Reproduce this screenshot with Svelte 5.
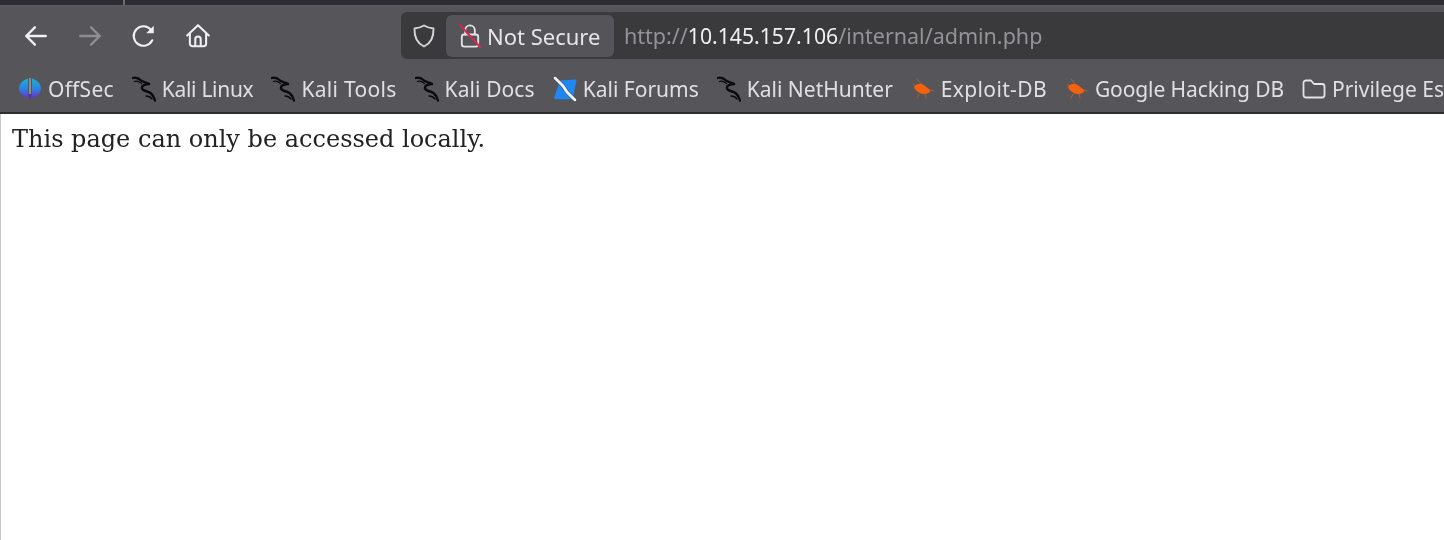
<script>
	// track = letter-spacing per label, the original UI font is a bit off from Noto Sans
	const bookmarks = [
		{ label: "OffSec", icon: "offsec", track: 0.25 },
		{ label: "Kali Linux", icon: "kali", track: -0.3 },
		{ label: "Kali Tools", icon: "kali", track: 0.3 },
		{ label: "Kali Docs", icon: "kali", track: 0.1 },
		{ label: "Kali Forums", icon: "forums", track: 0 },
		{ label: "Kali NetHunter", icon: "kali", track: 0 },
		{ label: "Exploit-DB", icon: "bug", track: 0.35 },
		{ label: "Google Hacking DB", icon: "bug", track: -0.1 },
		{ label: "Privilege Escalation", icon: "folder", track: 0 },
	];
</script>

<div class="browser">
	<div class="tabstrip"><span class="tab-sep"></span></div>

	<div class="toolbar">
		<nav class="nav">
			<button class="nav-btn" aria-label="Back">
				<svg viewBox="0 0 24 24" width="26" height="26" fill="none" stroke="#f0f0f1" stroke-width="2.2" stroke-linecap="round" stroke-linejoin="round">
					<path d="M3 12h18M11 4l-8 8 8 8" />
				</svg>
			</button>
			<button class="nav-btn" aria-label="Forward">
				<svg viewBox="0 0 24 24" width="26" height="26" fill="none" stroke="#8d8d92" stroke-width="2.2" stroke-linecap="round" stroke-linejoin="round">
					<path d="M3 12h18M13 4l8 8-8 8" />
				</svg>
			</button>
			<button class="nav-btn" aria-label="Reload">
				<svg viewBox="0 0 24 24" width="26" height="26" fill="none" stroke="#f0f0f1" stroke-width="2" stroke-linecap="round">
					<path d="M19.600 16a9 9 0 1 1-1-9.600" />
					<path d="M21 2.500V9.500H14Z" fill="#f0f0f1" stroke="none" />
				</svg>
			</button>
			<button class="nav-btn" aria-label="Home">
				<svg viewBox="0 0 24 24" width="26" height="26" fill="none" stroke="#f0f0f1" stroke-width="1.900" stroke-linecap="round" stroke-linejoin="round">
					<path d="M2 11.500 12 2l10 9.500M4.500 9.500V19a2.500 2.500 0 0 0 2.500 2.500h10a2.500 2.500 0 0 0 2.500-2.500V9.500M9.500 21.500V15a2.500 2.500 0 0 1 5 0v6.500" />
				</svg>
			</button>
		</nav>

		<div class="urlbar">
			<span class="shield">
				<svg viewBox="0 0 24 26" width="24" height="26" fill="none" stroke="#d6d6d8" stroke-width="1.900" stroke-linejoin="round">
					<path d="M12 2.500c3 1.800 6 2.700 9.500 3 .3 8-2 14.500-9.500 18C4.500 20 2.200 13.500 2.500 5.500c3.500-.3 6.500-1.200 9.500-3Z" />
				</svg>
			</span>
			<span class="identity">
				<svg viewBox="0 0 24 28" width="24" height="27" fill="none" stroke-linecap="round">
					<path d="M7 13V8.500a5 5 0 0 1 10 0V13" stroke="#e4e4e6" stroke-width="1.900" />
					<rect x="3.500" y="13" width="17" height="12.500" rx="2.500" stroke="#e4e4e6" stroke-width="1.900" />
					<path d="M1.500 3l21 23" stroke="#d7264f" stroke-width="2.200" />
				</svg>
				<span>Not Secure</span>
			</span>
			<span class="url"><span class="dim">http://</span><span class="host">10.145.157.106</span><span class="dim">/internal/admin.php</span></span>
		</div>
	</div>

	<div class="bookmarks">
		{#each bookmarks as b}
			<span class="bookmark">
				{#if b.icon === "offsec"}
					<svg viewBox="0 0 24 24" width="24" height="24">
						<defs>
							<linearGradient id="offsec" x1="0" y1="0" x2="0" y2="1">
								<stop offset="0" stop-color="#12b6d6" />
								<stop offset="0.55" stop-color="#2f7fe0" />
								<stop offset="1" stop-color="#6a2fd0" />
							</linearGradient>
						</defs>
						<path d="M10 1.500C4.500 3 1 7.500 1 11.500c0 4.500 4 8 9 9.500Z" fill="url(#offsec)" />
						<path d="M14 1.500c5.500 1.500 9 6 9 10 0 4.500-4 8-9 9.500Z" fill="url(#offsec)" />
						<path d="M12 1v18" stroke="#a9acb6" stroke-width="1.300" />
						<path d="M10.500 17h3L12 23.500Z" fill="#5b22c9" />
					</svg>
				{:else if b.icon === "kali"}
					<svg viewBox="0 0 24 26" width="24" height="26" fill="none" stroke="#0b0b0d" stroke-linecap="round" stroke-linejoin="round">
						<path d="M0.500 2C4 1 7 2.500 9 4.500c2 1.500 4.500 1.500 8 3.500" stroke-width="2.300" />
						<path d="M2.500 5.500C5 4.500 7.500 6 9.500 7.500" stroke-width="1.300" />
						<path d="M17 8c-4.500 0-7.500 2-7 4.500.5 2.500 5.500 2.500 8.500 4.500 2 1.500 3.500 4 4.500 7.500" stroke-width="2.400" />
						<path d="M14 20c2.500 0 4.500 1 6 3" stroke-width="1.300" />
					</svg>
				{:else if b.icon === "forums"}
					<svg viewBox="0 0 24 26" width="24" height="26" fill="none">
						<path d="M7 4.500 22 3.500c1 0 1.500 .5 1.300 1.500L20 22c-.2 1-.8 1.300-1.800 1.300H3c-1.500 0-2-.8-1.700-2Z" fill="#1e88f0" />
						<path d="M2 2l8 8 4 6 8 8" stroke="#2e3136" stroke-width="4.200" stroke-linecap="round" opacity="0.500" />
						<path d="M2 2l8 8 4 6 8 8" stroke="#f2f2f2" stroke-width="2.800" stroke-linecap="round" />
					</svg>
				{:else if b.icon === "bug"}
					<svg viewBox="0 0 24 24" width="24" height="24" fill="none" stroke="#e9641b" stroke-linecap="round">
						<path d="M3 10c2-3 6-4 9-2.500l6 4.500c2 2 1 3.500-1.500 4.500-3.500 1-7 .5-9.500-1.500C5 13.500 3.500 12 3 10Z" fill="#f4620f" stroke="none" />
						<path d="M6 2l4 5M2 7l3 2M8 17l-2 4M14 17l1 4M19 13l4 1" stroke-width="1" opacity="0.600" />
					</svg>
				{:else}
					<svg viewBox="0 0 24 24" width="24" height="24" fill="none" stroke="#e4e4e6" stroke-width="1.800" stroke-linejoin="round">
						<path d="M1.500 6a2.500 2.500 0 0 1 2.500-2.500h5l3 3.500h8a2.500 2.500 0 0 1 2.500 2.500V18a2.500 2.500 0 0 1-2.500 2.500H4A2.500 2.500 0 0 1 1.500 18Z" />
					</svg>
				{/if}
				<span class="label" style:letter-spacing="{b.track}px">{b.label}</span>
			</span>
		{/each}
	</div>

	<main class="page">
		<p>This page can only be accessed locally.</p>
	</main>
</div>

<style>
	:global(body) {
		margin: 0;
		background: #fff;
		overflow: hidden;
	}

	.browser {
		display: flex;
		flex-direction: column;
		height: 540px;
		width: 1444px;
		overflow: hidden;
		font-family: "Noto Sans", sans-serif;
		filter: blur(0.4px);
	}

	.tabstrip {
		height: 5px;
		background: #2d2c34;
		flex: none;
		padding-left: 123px;
	}

	.tab-sep {
		display: block;
		width: 2px;
		height: 5px;
		background: #6b6b70;
	}

	.toolbar {
		display: flex;
		align-items: center;
		height: 61px;
		padding: 0 0 1px 0;
		box-sizing: border-box;
		background: #55555a;
		border-top: 1px solid #5c5c61;
		flex: none;
	}

	.nav {
		display: flex;
		width: 401px;
		padding-left: 9px;
		box-sizing: border-box;
		flex: none;
	}

	.nav-btn {
		width: 54px;
		height: 40px;
		padding: 0;
		border: none;
		background: none;
		display: flex;
		align-items: center;
		justify-content: center;
	}

	.urlbar {
		flex: 1;
		height: 47px;
		display: flex;
		align-items: center;
		background: #3a3a3c;
		border-radius: 6px 0 0 6px;
		color: #f0f0f1;
	}

	.shield {
		display: flex;
		width: 45px;
		justify-content: center;
	}

	.identity {
		display: flex;
		align-items: center;
		gap: 5px;
		height: 42px;
		width: 168px;
		padding-left: 12px;
		box-sizing: border-box;
		background: #555559;
		border-radius: 6px;
		font-size: 22px;
		color: #e6e6e8;
	}

	.url {
		margin-left: 10px;
		font-size: 21.500px;
		white-space: nowrap;
		color: #f0f0f1;
	}

	.host {
		font-size: 21.200px;
	}

	.dim {
		color: #949498;
	}

	.bookmarks {
		display: flex;
		align-items: center;
		gap: 18px;
		height: 48px;
		padding: 0 0 0 18px;
		box-sizing: border-box;
		background: #55555a;
		border-bottom: 2px solid #2e2e32;
		white-space: nowrap;
		flex: none;
		overflow: hidden;
	}

	.bookmark {
		display: flex;
		align-items: center;
		gap: 6px;
		flex: none;
	}

	.label {
		font-size: 21px;
		color: #e0e0e2;
	}

	.page {
		flex: 1;
		background: #fff;
		border-left: 1px solid #c9c9c9;
		padding: 11px 11px;
	}

	.page p {
		margin: 0;
		font-family: "DejaVu Serif", serif;
		font-size: 24px;
		color: #222;
	}
</style>
